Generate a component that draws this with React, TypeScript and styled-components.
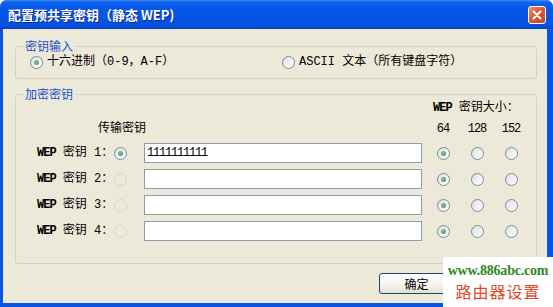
import React from "react";
import styled, { createGlobalStyle } from "styled-components";

const Global = createGlobalStyle`
  html, body { margin: 0; padding: 0; background: #ffffff; }
  body { font-family: "Liberation Mono", "Noto Sans CJK SC", monospace; font-size: 12px; }
  * { box-sizing: border-box; }
`;

const Frame = styled.div`
  position: relative;
  width: 553px;
  height: 307px;
  display: flex;
  flex-direction: column;
  background: #0a54e4;
  border-radius: 7px 7px 0 0;
  overflow: hidden;
`;

const TitleBar = styled.div`
  height: 29px;
  flex: none;
  display: flex;
  align-items: center;
  padding: 0 6px 0 8px;
  background: linear-gradient(to bottom, #3d8cf5 0%, #0f62ee 8%, #0557e8 30%, #0254e6 70%, #0450dc 90%, #0341c4 100%);
`;

const Title = styled.div`
  flex: 1;
  color: #ffffff;
  font-family: "Noto Sans CJK SC", "Liberation Sans", sans-serif;
  font-weight: 700;
  font-size: 13px;
  line-height: 16px;
  text-shadow: 1px 1px 0 #0a2a8a;
`;

const CloseButton = styled.div`
  width: 18px;
  height: 18px;
  border: 1px solid #ffffff;
  border-radius: 3px;
  background: linear-gradient(135deg, #f0906c 0%, #df5a30 45%, #c8401e 100%);
  display: flex;
  align-items: center;
  justify-content: center;
  margin-right: 1px;
`;

const Body = styled.div`
  flex: 1;
  margin: 0 6px 4px 3px;
  background: #ece9d8;
  display: flex;
  flex-direction: column;
  padding-top: 10px;
`;

const Group = styled.fieldset<{ $pb: number; $mt?: number }>`
  margin: ${(p) => p.$mt ?? 0}px 10px 0 12px;
  padding: 0 0 ${(p) => p.$pb}px 0;
  border: 1px solid #d5d2c1;
  border-radius: 3px;
  min-width: 0;
`;

const Legend = styled.legend`
  margin-left: 7px;
  padding: 0 2px;
  color: #1b50d0;
  font-family: "Noto Sans CJK SC", sans-serif;
  font-size: 12px;
  line-height: 14px;
`;

const OptionRow = styled.div`
  display: flex;
  align-items: center;
  height: 14px;
  padding-left: 14px;
  margin-top: 2px;
`;

const Option = styled.label<{ $w?: number }>`
  display: flex;
  align-items: center;
  gap: 4px;
  width: ${(p) => (p.$w ? `${p.$w}px` : "auto")};
  color: #000000;
  line-height: 14px;
  white-space: nowrap;
`;

const Radio = styled.span<{ $checked?: boolean; $disabled?: boolean }>`
  position: relative;
  display: inline-block;
  flex: none;
  width: 13px;
  height: 13px;
  border-radius: 50%;
  border: 1px solid ${(p) => (p.$disabled ? "#d8d5c6" : "#7a8b9c")};
  background: ${(p) =>
    p.$disabled ? "transparent" : "linear-gradient(135deg, #d9dde3 0%, #eef0f4 50%, #ffffff 100%)"};
  &::after {
    content: "";
    display: ${(p) => (p.$checked ? "block" : "none")};
    position: absolute;
    left: 3px;
    top: 3px;
    width: 5px;
    height: 5px;
    border-radius: 50%;
    background: radial-gradient(circle at 40% 40%, #8fc08f, #4d8a55);
  }
`;

const KeyGrid = styled.div`
  display: grid;
  grid-template-columns: 77px 30px 282px 34px 34px 34px;
  grid-template-rows: 14px 16px 20px 20px 20px 20px;
  row-gap: 6px;
  padding-left: 21px;
  align-items: center;
`;

const SizeTitle = styled.div`
  grid-column: 4 / span 3;
  grid-row: 1;
  padding-left: 7px;
  line-height: 14px;
  white-space: nowrap;
`;

const TxTitle = styled.div`
  grid-column: 1 / span 2;
  grid-row: 2;
  justify-self: end;
  margin-right: -2px;
  margin-top: -4px;
  font-family: "Noto Sans CJK SC", sans-serif;
  line-height: 14px;
`;

const SizeNum = styled.div<{ $col: number }>`
  grid-column: ${(p) => p.$col};
  grid-row: 2;
  justify-self: center;
  line-height: 14px;
  letter-spacing: -1px;
`;

const KeyLabel = styled.div<{ $row: number }>`
  grid-column: 1;
  grid-row: ${(p) => p.$row};
  white-space: nowrap;
  line-height: 14px;
`;

const Cell = styled.div<{ $row: number; $col: number }>`
  grid-column: ${(p) => p.$col};
  grid-row: ${(p) => p.$row};
  display: flex;
  align-items: center;
`;

const CenterCell = styled(Cell)`
  justify-content: center;
`;

const KeyInput = styled.input`
  width: 278px;
  height: 20px;
  margin: 0;
  border: 1px solid #8c9cae;
  background: #ffffff;
  padding: 0 0 0 2px;
  font-family: "Liberation Mono", monospace;
  font-size: 12px;
  letter-spacing: -1.2px;
  color: #000000;
  outline: none;
`;

const Lat = styled.span`
  font-weight: 700;
  letter-spacing: -1px;
`;

const Buttons = styled.div`
  display: flex;
  justify-content: flex-end;
  margin: 9px 93px 0 0;
`;

const Button = styled.div`
  width: 75px;
  height: 21px;
  border: 1px solid #1d4474;
  border-radius: 3px;
  background: linear-gradient(to bottom, #ffffff 0%, #f4f3ee 60%, #e3e0d4 100%);
  display: flex;
  align-items: center;
  justify-content: center;
  font-family: "Noto Sans CJK SC", sans-serif;
  font-size: 12px;
  color: #000000;
`;

const Watermark = styled.div`
  position: absolute;
  right: 0;
  bottom: 0;
  width: 110px;
  height: 50px;
  background: #ffffff;
  display: flex;
  flex-direction: column;
  align-items: center;
  padding-top: 6px;
`;

const WmUrl = styled.div`
  color: #2f8a22;
  font-family: "Liberation Serif", serif;
  font-weight: 700;
  font-size: 14px;
  line-height: 16px;
  letter-spacing: -0.2px;
`;

const WmName = styled.div`
  color: #e2482a;
  font-family: "Noto Sans CJK SC", sans-serif;
  font-size: 16px;
  line-height: 22px;
  letter-spacing: 1px;
  margin-top: 1px;
`;

const keys = [
  { n: 1, tx: true, value: "1111111111" },
  { n: 2, tx: false, value: "" },
  { n: 3, tx: false, value: "" },
  { n: 4, tx: false, value: "" },
];

export default function App() {
  return (
    <>
      <Global />
      <Frame>
        <TitleBar>
          <Title>配置预共享密钥（静态 WEP)</Title>
          <CloseButton>
            <svg width="10" height="10" viewBox="0 0 10 10">
              <path d="M1.5 1.5 L8.5 8.5 M8.5 1.5 L1.5 8.5" stroke="#ffffff" strokeWidth="2" strokeLinecap="round" />
            </svg>
          </CloseButton>
        </TitleBar>
        <Body>
          <Group $pb={9}>
            <Legend>密钥输入</Legend>
            <OptionRow>
              <Option $w={252}>
                <Radio $checked />
                十六进制（0-9，A-F）
              </Option>
              <Option>
                <Radio />
                ASCII 文本（所有键盘字符）
              </Option>
            </OptionRow>
          </Group>
          <Group $pb={22} $mt={8}>
            <Legend>加密密钥</Legend>
            <KeyGrid>
              <SizeTitle>
                <Lat>WEP</Lat> 密钥大小：
              </SizeTitle>
              <TxTitle>传输密钥</TxTitle>
              <SizeNum $col={4}>64</SizeNum>
              <SizeNum $col={5}>128</SizeNum>
              <SizeNum $col={6}>152</SizeNum>
              {keys.map((k, i) => {
                const row = i + 3;
                return (
                  <React.Fragment key={k.n}>
                    <KeyLabel $row={row}>
                      <Lat>WEP</Lat> 密钥 {k.n}：
                    </KeyLabel>
                    <Cell $row={row} $col={2}>
                      <Radio $checked={k.tx} $disabled={!k.tx} />
                    </Cell>
                    <Cell $row={row} $col={3}>
                      <KeyInput readOnly value={k.value} />
                    </Cell>
                    <CenterCell $row={row} $col={4}>
                      <Radio $checked />
                    </CenterCell>
                    <CenterCell $row={row} $col={5}>
                      <Radio />
                    </CenterCell>
                    <CenterCell $row={row} $col={6}>
                      <Radio />
                    </CenterCell>
                  </React.Fragment>
                );
              })}
            </KeyGrid>
          </Group>
          <Buttons>
            <Button>确定</Button>
          </Buttons>
        </Body>
        <Watermark>
          <WmUrl>www.886abc.com</WmUrl>
          <WmName>路由器设置</WmName>
        </Watermark>
      </Frame>
    </>
  );
}
